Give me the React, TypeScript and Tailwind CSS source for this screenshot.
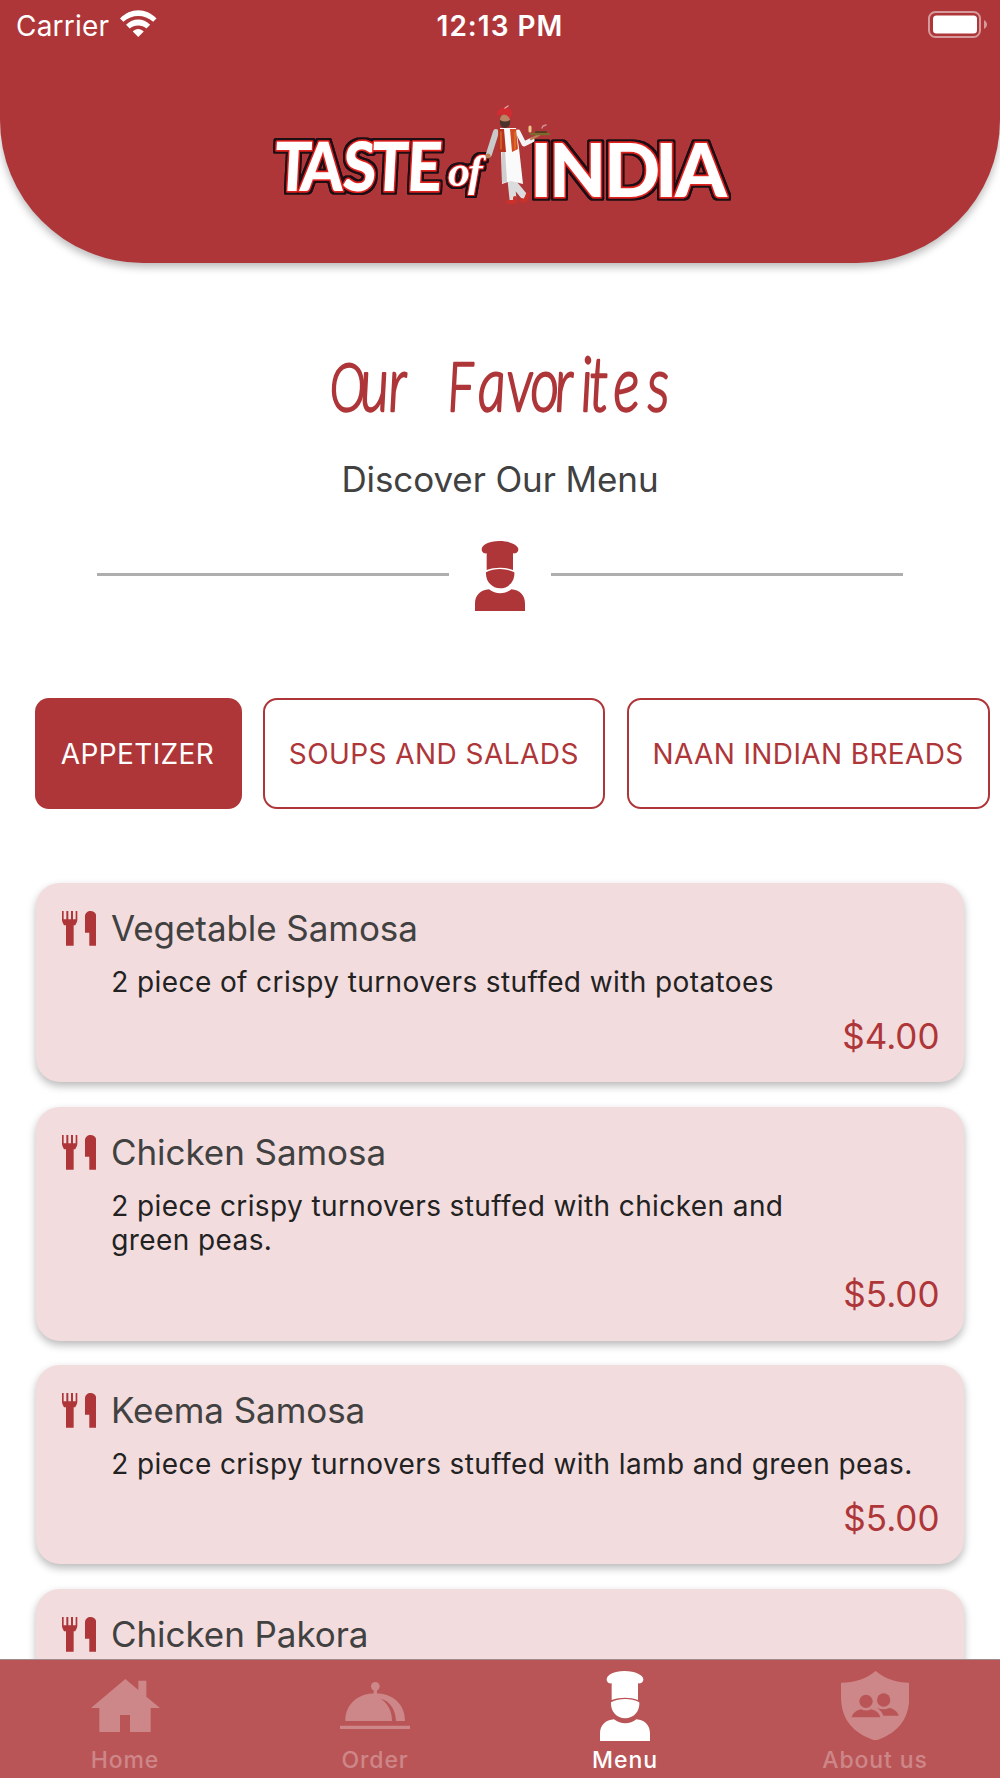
import React from 'react';

const menuItems = [
  { name: 'Vegetable Samosa', text: '2 piece of crispy turnovers stuffed with potatoes', price: '$4.00' },
  { name: 'Chicken Samosa', text: '2 piece crispy turnovers stuffed with chicken and\ngreen peas.', price: '$5.00' },
  { name: 'Keema Samosa', text: '2 piece crispy turnovers stuffed with lamb and green peas.', price: '$5.00' },
  { name: 'Chicken Pakora', text: '', price: '' },
];

function ChefIcon() {
  return (
    <svg viewBox="105 63 150 210" className="h-[70px] w-[50px] fill-current">
      <path d="M140 150V100C129 102 125 95 125 88C125 75 147 63 178 63C212 63 235 76 235 88C235 95 231 102 219 100V150C195 141 165 141 140 150Z" />
      <path d="M138 157C165 144 196 144 223 157C225 185 205 205 180 205C156 205 136 185 138 157Z" />
      <path d="M105 273V250C105 226 122 210 147 208C167 224 195 224 214 208C239 210 255 226 255 250V273Z" />
    </svg>
  );
}

function CutleryIcon() {
  return (
    <svg viewBox="125 124 103 104" className="h-[34.7px] w-[34.3px] shrink-0 fill-[#ae3639]">
      <path d="M125 124h5v25h8v-25h6v25h8v-25h6v25h8v-25h5v26c0 8-5 12-6 17h-5v61h-23v-61h-6c-1-5-6-9-6-17z" />
      <path d="M194 189V141C194 130 202 124 211 124C220 124 228 130 228 141V228H207V189Z" />
    </svg>
  );
}

function HomeIcon() {
  return (
    <svg viewBox="271 329 207 159" className="h-[53px] w-[69px] fill-current">
      <path d="M271 416L374 329L413 362V334H437V382L478 416H450V488H388V437H358V488H296V416Z" />
    </svg>
  );
}

function OrderIcon() {
  return (
    <svg viewBox="1020 337 210 143" className="h-[47.7px] w-[70px] fill-current">
      <circle cx="1126" cy="350" r="13" />
      <path d="M1121 360h10v14h-10z" />
      <path d="M1036 454C1036 405 1072 371 1126 371C1180 371 1215 405 1215 454H1188C1187 422 1172 395 1142 387C1165 402 1176 425 1176 454Z" />
      <path d="M1020 468h210v12h-210z" />
    </svg>
  );
}

function AboutIcon() {
  return (
    <svg viewBox="1023 304 206 209" className="h-[69.7px] w-[68.7px] fill-current">
      <path d="M1127 304C1156 328 1190 339 1228 339V380C1228 455 1187 493 1126 513C1065 493 1023 455 1023 380V339C1065 339 1098 328 1127 304Z" />
      <g className="fill-[#ba5557]">
        <circle cx="1098" cy="395" r="20" />
        <circle cx="1151" cy="391" r="20" />
        <path d="M1055 443C1058 430 1070 422 1083 419C1093 424 1103 424 1113 419C1127 422 1138 430 1141 443Z" />
        <path d="M1131 415C1143 420 1157 420 1168 415C1182 417 1193 427 1196 438H1150C1147 428 1141 422 1131 415Z" />
      </g>
    </svg>
  );
}

const navItems = [
  { label: 'Home', Icon: HomeIcon, active: false },
  { label: 'Order', Icon: OrderIcon, active: false },
  { label: 'Menu', Icon: ChefIcon, active: true },
  { label: 'About us', Icon: AboutIcon, active: false },
];

function Logo() {
  return (
    <svg viewBox="270 100 464 108" className="h-[108px] w-[464px] overflow-visible">
      <defs>
        <filter id="outline" x="-5%" y="-15%" width="110%" height="130%">
          <feMorphology in="SourceAlpha" operator="dilate" radius="2.4" result="wide" />
          <feGaussianBlur in="wide" stdDeviation="0.6" result="soft" />
          <feFlood floodColor="#1c1012" />
          <feComposite in2="soft" operator="in" result="edge" />
          <feMerge>
            <feMergeNode in="edge" />
            <feMergeNode in="edge" />
            <feMergeNode in="SourceGraphic" />
          </feMerge>
        </filter>
      </defs>
      <g filter="url(#outline)" className="fill-white stroke-[#e2231f] [paint-order:stroke]" strokeWidth="3" strokeLinejoin="round">
        <text transform="translate(0 191) skewX(-3) scale(.9 1)" x="306 335 382 414 453" y="0" className="font-['Lato'] text-[68px] font-black">TASTE</text>
        <text x="450 470" y="186" strokeWidth="2" className="font-['Liberation_Serif'] text-[44px] font-bold italic">of</text>
        <text transform="translate(0 197)" x="532 551 606 657 677" y="0" className="font-['Lato'] text-[74px] font-black">INDIA</text>
      </g>
      <g transform="translate(0 2)" strokeLinecap="round" strokeLinejoin="round">
        <path d="M513 178L515 197M512 177L526 194" stroke="#dcdcdc" strokeWidth="7" />
        <path d="M510 200l7 0l0-4M523 198l4 1l3-7" stroke="#c8322a" strokeWidth="4" fill="none" />
        <path d="M498 130L491 152" stroke="#c9c9c9" strokeWidth="6" />
        <circle cx="490" cy="154" r="2.5" fill="#b98158" />
        <path d="M520 130L526 142L534 138" stroke="#f4f4f4" strokeWidth="5" fill="none" />
        <path d="M533 137L541 133" stroke="#b98158" strokeWidth="2.5" />
        <path d="M502 126H518L521 146L525 182L513 179L504 182L503 148Z" fill="#fafafa" />
        <path d="M504 148L504 181L509 180L507 148Z" fill="#cfcfcf" />
        <path d="M500 127L506 127L508 150L501 150Z" fill="#b8331f" />
        <path d="M512 127L518 127L520 147L514 150Z" fill="#d24a22" />
        <path d="M503 130v17M517 130v17" stroke="#dd8a2a" strokeWidth="1" />
        <ellipse cx="507" cy="118" rx="5" ry="6" fill="#b98564" />
        <path d="M502 118Q507 121 512 118Q513 125 507 126Q501 125 502 118Z" fill="#4b342a" />
        <path d="M499 114C498 106 506 104 511 106C516 109 514 114 512 117C509 111 504 112 499 114Z" fill="#d12c31" />
        <path d="M507 106L510 104" stroke="#e7a0a0" strokeWidth="1.5" />
        <path d="M533 132H551" stroke="#7a6a2c" strokeWidth="2.5" />
        <path d="M538 130H548" stroke="#5d3b22" strokeWidth="2" />
        <path d="M532 129v-4" stroke="#ecc98b" strokeWidth="3" />
        <path d="M544 126l1-2l3-1" stroke="#d58f98" strokeWidth="1.5" fill="none" />
      </g>
    </svg>
  );
}

export default function App() {
  return (
    <div className="relative flex h-[1778px] w-[1000px] flex-col overflow-hidden bg-white font-['Inter',sans-serif]">
      <header className="flex h-[263px] shrink-0 flex-col items-center rounded-b-[143px] bg-[#ae3639] shadow-[0_4px_9px_rgba(0,0,0,0.28)]">
        <div className="grid h-[51px] w-full grid-cols-3 items-center pr-[13px] pl-4 text-[28px] leading-none text-white">
          <div className="flex items-center gap-[11px]">
            <span className="tracking-[0.2px]">Carrier</span>
            <svg viewBox="361 31 109 80" className="mt-[-4px] h-[27px] w-[36.5px] fill-white">
              <path d="M361 56C392 23 439 23 470 56L460 66C434 43 397 43 371 66Z" />
              <path d="M379 75C400 54 431 54 451 75L440 86C427 74 403 74 390 86Z" />
              <path d="M399 95C408 85 422 85 432 95L415.500 111Z" />
            </svg>
          </div>
          <span className="pr-[3px] text-center font-semibold tracking-[1px]">12:13 PM</span>
          <svg viewBox="0 0 59 27" className="mt-[-2px] h-[27px] w-[59px] justify-self-end">
            <rect x="1" y="1" width="51" height="25" rx="6.500" fill="none" stroke="#d69a9c" strokeWidth="2" />
            <rect x="5" y="4.500" width="44" height="18" rx="3.500" fill="#fff" />
            <path d="M56 9C60 11 60 16 56 18Z" fill="#d69a9c" />
          </svg>
        </div>
        <div className="mt-[49px]"><Logo /></div>
      </header>

      <section className="flex shrink-0 flex-col items-center pt-[87px]">
        <svg viewBox="330 350 342 70" className="h-[70px] w-[342px] overflow-visible">
          <text
            transform="translate(0 411) skewX(2) scale(.74 1)"
            className="fill-[#ae3639] stroke-[#ae3639] font-['Lato'] text-[76px] font-light italic"
            strokeWidth="2.400"
            strokeLinejoin="round"
          >
            <tspan x="448" className="text-[66px]">O</tspan>
            <tspan x="489 527">ur</tspan>
            <tspan x="570"> </tspan>
            <tspan x="607" className="text-[68px]">F</tspan>
            <tspan x="648 687 719 752 787 799 831 877">avorites</tspan>
          </text>
        </svg>
        <h2 className="mt-[37px] text-[35px] leading-[44px] tracking-[-0.1px] text-[#414141]">Discover Our Menu</h2>
        <div className="mt-[40px] flex items-center gap-[26px] text-[#ae3639]">
          <div className="mb-[3px] h-[2.5px] w-[352px] bg-[#aeaeae]" />
          <ChefIcon />
          <div className="mb-[3px] h-[2.5px] w-[352px] bg-[#aeaeae]" />
        </div>
      </section>

      <nav className="mt-[87px] flex h-[111px] shrink-0 gap-[21.400px] pl-[35.300px] text-[28px]">
        <button className="w-[206.400px] shrink-0 rounded-[14px] bg-[#ae3639] pr-[2px] tracking-[0.400px] text-white">APPETIZER</button>
        <button className="w-[342.400px] shrink-0 rounded-[14px] border-2 border-[#ae3639] pr-px tracking-[0.440px] text-[#ae3639]">SOUPS AND SALADS</button>
        <button className="w-[363.400px] shrink-0 rounded-[14px] border-2 border-[#ae3639] pr-px tracking-[0.370px] text-[#ae3639]">NAAN INDIAN BREADS</button>
      </nav>

      <main className="mt-[73.800px] flex flex-col gap-[24.400px] px-9">
        {menuItems.map((item) => (
          <article
            key={item.name}
            className="min-h-[199.500px] shrink-0 rounded-[24px] bg-[#f2dcdd] pt-[24px] pr-[24.500px] pb-[24.400px] pl-[25.700px] shadow-[0_4px_8px_rgba(0,0,0,0.28)]"
          >
            <div className="flex h-[43.400px] items-center gap-[15px] text-[35px] leading-none tracking-[-0.070px] text-[#414141]">
              <CutleryIcon />
              <h3>{item.name}</h3>
            </div>
            <p className="mt-[14.600px] pl-[49.600px] text-[28px] leading-[34.500px] tracking-[0.400px] whitespace-pre text-[#222222]">{item.text}</p>
            <p className="mt-[14.500px] text-right text-[35px] leading-[44px] text-[#ae3639]">{item.price}</p>
          </article>
        ))}
      </main>

      <footer className="absolute inset-x-0 bottom-0 grid h-[119px] grid-cols-4 border-t border-[#a08a8b] bg-[#ba5557]">
        {navItems.map(({ label, Icon, active }) => (
          <div key={label} className={active ? 'flex flex-col items-center pt-[10.500px] text-white' : 'flex flex-col items-center pt-[10.500px] text-[#ce8788]'}>
            <div className="flex h-[70px] items-center"><Icon /></div>
            <span className="mt-[5px] text-[23px] leading-[28px] font-medium tracking-[0.900px]">{label}</span>
          </div>
        ))}
      </footer>
    </div>
  );
}
